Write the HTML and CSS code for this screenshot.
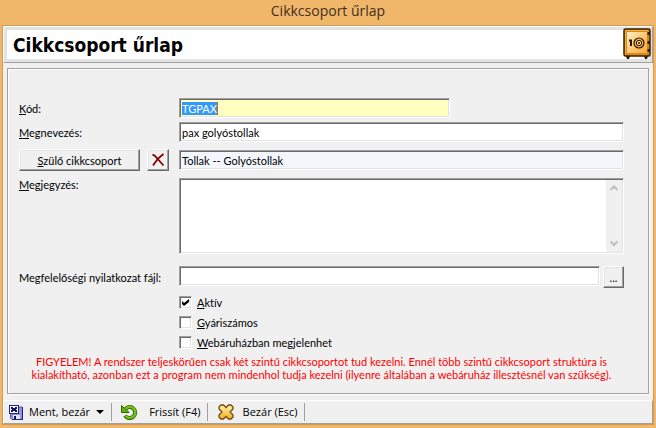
FILE: index.html
```html
<!DOCTYPE html>
<html lang="hu">
<head>
<meta charset="utf-8">
<title>Cikkcsoport űrlap</title>
<link rel="stylesheet" href="styles.css">
</head>
<body>
<div class="window">
  <div class="titlebar">Cikkcsoport űrlap</div>
  <form class="client">
    <header class="banner">
      <h1>Cikkcsoport űrlap</h1>
      <svg class="safe" width="28" height="32" viewBox="0 0 28 32" aria-hidden="true">
        <defs>
          <linearGradient id="door" x1="0" y1="0" x2="1" y2="1">
            <stop offset="0" stop-color="#fff0cc"/><stop offset=".5" stop-color="#fdc878"/><stop offset="1" stop-color="#f9a83a"/>
          </linearGradient>
        </defs>
        <path d="M3 28h4l-1 3H4zM21 28h4l-1 3h-2z" fill="#2b1600"/>
        <rect x="1" y="1" width="26" height="27" rx="1.500" fill="#d88a18" stroke="#3a2000" stroke-width="1.500"/>
        <path d="M2.500 27V2.500H25" fill="none" stroke="#f5b040"/>
        <rect x="4" y="4" width="20" height="21" fill="url(#door)"/>
        <path d="M25.500 4v3M25.500 13v3M25.500 21v3" stroke="#2b1600" stroke-width="2"/>
        <path d="M6 12.500h3M8 12v6" stroke="#2b1600" stroke-width="2"/>
        <circle cx="16" cy="15" r="5" fill="#f7b347" stroke="#2b1600" stroke-width="1.200"/>
        <circle cx="16" cy="15" r="2.700" fill="#ffd98c" stroke="#2b1600"/>
        <circle cx="16" cy="15" r="1" fill="#2b1600"/>
      </svg>
    </header>

    <main class="panel">
      <div class="row">
        <label for="code"><u>K</u>ód:</label>
        <div class="short"><input class="field key" id="code" value="TGPAX" autofocus><span class="caret"></span></div>
      </div>
      <div class="row">
        <label for="name"><u>M</u>egnevezés:</label>
        <input class="field" id="name" value="pax golyóstollak">
      </div>
      <div class="row spaced">
        <div class="parent">
          <button class="btn wide" type="button" id="pick"><u>S</u>zülő cikkcsoport</button>
          <button class="btn square" type="button" aria-label="Törlés">
            <svg width="14" height="14" viewBox="0 0 14 14"><path d="M1.500 1.500L4 3L12.500 12.500M12.500 1L7 5.500L2 12.500" fill="none" stroke="#800000" stroke-width="1.800"/></svg>
          </button>
        </div>
        <input class="field tinted" value="Tollak -- Golyóstollak" aria-labelledby="pick" readonly>
      </div>
      <div class="row spaced top">
        <label for="note"><u>M</u>egjegyzés:</label>
        <div class="memo">
          <textarea id="note"></textarea>
          <div class="scroll">
            <svg width="8" height="7" viewBox="0 0 8 7"><path d="M0.500 5L4 1.500L7.500 5" fill="none" stroke="#bfbfbf" stroke-width="2.200"/></svg>
            <svg width="8" height="7" viewBox="0 0 8 7"><path d="M0.500 1.500L4 5L7.500 1.500" fill="none" stroke="#bfbfbf" stroke-width="2.200"/></svg>
          </div>
        </div>
      </div>
      <div class="row far">
        <label for="file">Megfelelőségi nyilatkozat fájl:</label>
        <div class="file">
          <input class="field" id="file">
          <button class="btn dots" type="button" aria-label="Tallózás">...</button>
        </div>
      </div>
      <div class="checks">
        <label><input type="checkbox" checked><span><u>A</u>ktív</span></label>
        <label><input type="checkbox"><span><u>G</u>yáriszámos</span></label>
        <label><input type="checkbox"><span><u>W</u>ebáruházban megjelenhet</span></label>
      </div>
      <p class="warning">FIGYELEM! A rendszer teljeskörűen csak két szintű cikkcsoportot tud kezelni. Ennél több szintű cikkcsoport struktúra is<br>kialakítható, azonban ezt a program nem mindenhol tudja kezelni (ilyenre általában a webáruház illesztésnél van szükség).</p>
    </main>

    <footer class="toolbar">
      <button class="tool save" type="button">
        <svg width="14" height="15" viewBox="0 0 14 15" aria-hidden="true">
          <path d="M3 2H13.500V14.500H3L1.500 13V8" fill="#8c94dc" stroke="#5058b0"/>
          <path d="M13.500 2V14.500H3" fill="none" stroke="#20207c"/>
          <rect x="0.500" y="0.500" width="9" height="8" fill="#fff" stroke="#20207c"/>
          <path d="M2 2h2v1h2V2h2v2H7v1h1v2H6V6H4v1H2V5h1V4H2z" fill="#10106c"/>
          <rect x="4" y="10" width="7" height="4" fill="#e4e6f8"/>
          <path d="M5 11h2v3H5z" fill="#10106c"/>
        </svg>
        <span>Ment, bezár</span>
        <svg width="8" height="4" viewBox="0 0 8 4" aria-hidden="true"><path d="M0 0h8L4 4z" fill="#000"/></svg>
      </button>
      <button class="tool refresh" type="button">
        <svg width="17" height="16" viewBox="0 0 17 16" aria-hidden="true">
          <path d="M4.500 5A5.500 5.500 0 1 1 4 11.500" fill="none" stroke="#2c6800" stroke-width="4"/>
          <path d="M0.500 1.500V8.500H8L5.800 6.200L3 4Z" fill="#62b010" stroke="#2c6800"/>
          <path d="M4.500 5A5.500 5.500 0 1 1 4.500 11.800" fill="none" stroke="#72c01c" stroke-width="2.400"/>
        </svg>
        <span>Frissít (F4)</span>
      </button>
      <button class="tool close" type="button">
        <svg width="16" height="16" viewBox="0 0 16 16" aria-hidden="true">
          <defs><linearGradient id="gold" x1="0" y1="0" x2="0" y2="1"><stop offset="0" stop-color="#fff0b0"/><stop offset="1" stop-color="#eeb020"/></linearGradient></defs>
          <path d="M3 1H5.500L8 3.500L10.500 1H13L15 3V5L12 8L15 11V13L13 15H10.500L8 12.500L5.500 15H3L1 13V11L4 8L1 5V3Z" fill="url(#gold)" stroke="#6e4a08" stroke-width="1.300" stroke-linejoin="round"/>
        </svg>
        <span>Bezár (Esc)</span>
      </button>
    </footer>
  </form>
</div>
<script src="form.js"></script>
</body>
</html>
```
FILE: styles.css
```css
* { box-sizing: border-box; }

body {
  margin: 0;
  background: #f0b76b;
  color: #000;
  font: 11px/13px Lato, Tahoma, sans-serif;
  font-variant-ligatures: none;
}

.window {
  min-height: 100vh;
  display: flex;
  flex-direction: column;
  padding: 0 2px 3px;
}

.titlebar {
  height: 25px;
  font: 14px/22px "Open Sans", "Segoe UI", sans-serif;
  text-align: center;
  color: #3f2f1c;
}

.client {
  flex: 1;
  display: flex;
  flex-direction: column;
  border: 1px solid #d09b58;
  background: #f0f0f0;
}

.banner {
  display: flex;
  justify-content: space-between;
  align-items: center;
  height: 37px;
  border: 1px solid #a0a0a0;
  border-top-color: #fff;
  border-left-color: #fff;
  box-shadow: inset 0 0 0 3px #e3e3e3;
  background: #fff;
  padding: 0 1px 0 9px;
}

.banner h1 {
  margin: 0;
  font: bold 19px/24px "DejaVu Sans Condensed", Tahoma, sans-serif;
}

.safe { display: block; margin-bottom: 2px; }

.panel {
  flex: 1;
  margin: 5px 4px 6px;
  border: 1px solid #a0a0a0;
  box-shadow: inset 1px 1px #fff, 1px 1px #fff;
  padding: 29px 24px 0 11px;
}

.row {
  display: grid;
  grid-template-columns: 160px 1fr;
  align-items: center;
  margin-bottom: 4px;
}

.row.spaced { margin: 7px 0; }
.row.top { align-items: start; }
.row.far { margin: 12px 0 8px; }

u { text-underline-offset: 1px; text-decoration-thickness: 1px; }

.field, .memo {
  width: 100%;
  border: 1px solid;
  border-color: #a0a0a0 #fff #fff #a0a0a0;
  box-shadow: inset 1px 1px #696969, inset -1px -1px #e3e3e3;
  background: #fff;
  border-radius: 0;
  outline: 0;
}

.field {
  height: 20px;
  padding: 0 2px;
  font: inherit;
  color: inherit;
}

.key { background: #ffffc0; }
.key::selection { background: #3399ff; color: #fff; }
.tinted { background: #f3f7fd; }

.short { position: relative; width: 61%; }

.short .field { display: block; }

.caret {
  position: absolute;
  left: 38px;
  top: 4px;
  width: 1px;
  height: 13px;
  background: #cc6600;
}

.parent { display: flex; gap: 7px; }

.btn {
  height: 22px;
  padding: 0;
  border: 1px solid;
  border-color: #fff #696969 #696969 #fff;
  box-shadow: inset -1px -1px #a0a0a0, inset 1px 1px #e3e3e3;
  background: #f0f0f0;
  font: inherit;
  color: inherit;
}

.wide { width: 121px; }
.square { width: 22px; display: grid; place-items: center; }
.dots { width: 21px; flex: none; }

.memo {
  display: flex;
  height: 76px;
  padding: 1px;
}

.memo textarea {
  flex: 1;
  min-width: 0;
  border: 0;
  padding: 1px;
  background: none;
  outline: 0;
  resize: none;
  font: inherit;
}

.scroll {
  width: 16px;
  background: #f0f0f0;
  display: flex;
  flex-direction: column;
  justify-content: space-between;
  align-items: center;
  padding: 5px 0;
}

.file { display: flex; gap: 3px; }

.checks {
  display: flex;
  flex-direction: column;
  align-items: start;
  gap: 7px;
  margin-left: 160px;
}

.checks label { display: flex; align-items: center; gap: 5px; }

.checks input {
  appearance: none;
  width: 13px;
  height: 13px;
  margin: 0;
  border: 1px solid;
  border-color: #a0a0a0 #fff #fff #a0a0a0;
  box-shadow: inset 1px 1px #696969, inset -1px -1px #e3e3e3;
  background: #fff;
}

.checks input:checked::after {
  content: "";
  display: block;
  width: 7px;
  height: 7px;
  margin: 2px;
  background: #000;
  clip-path: polygon(0 29%, 29% 57%, 100% 0, 100% 43%, 29% 100%, 0 71%);
}

.warning {
  margin: 6px 0 0;
  text-align: center;
  white-space: nowrap;
  color: #f00;
}

.toolbar {
  display: flex;
  align-items: center;
  height: 24px;
  border: 1px solid #a0a0a0;
  border-top-color: #fff;
  border-left-color: #fff;
}

.tool {
  display: flex;
  align-items: center;
  height: 18px;
  padding: 0 6px;
  border: 0;
  border-right: 1px solid #a0a0a0;
  background: none;
  font: 11px/16px "Open Sans", "Segoe UI", sans-serif;
  color: inherit;
  white-space: nowrap;
}

.save { gap: 6px; padding: 0 7px 0 5px; }
.refresh { gap: 11px; padding-left: 9px; }
.close { gap: 9px; padding-left: 10px; }
```
FILE: form.js
```js
const code = document.getElementById("code");
code.focus();
code.select();
```
